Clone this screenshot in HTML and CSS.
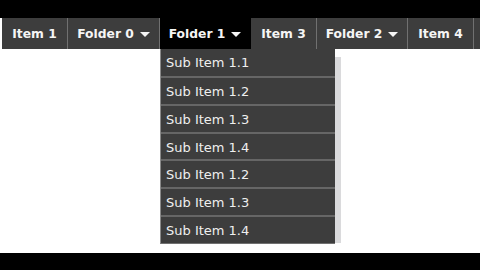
FILE: index.html
```html
<!DOCTYPE html>
<html lang="en">
<head>
    <meta charset="UTF-8">
    <title>Drop Down Menu</title>
    <link rel="stylesheet" href="styles.css">
</head>
<body>
    <div class="band"></div>
    <div class="page">
        <ul class="menu">
            <li class="item">Item 1</li>
            <li class="item folder">Folder 0 <span class="caret"></span></li>
            <li class="item folder active">Folder 1 <span class="caret"></span>
                <ul class="sub">
                    <li>Sub Item 1.1</li>
                    <li>Sub Item 1.2</li>
                    <li>Sub Item 1.3</li>
                    <li>Sub Item 1.4</li>
                    <li>Sub Item 1.2</li>
                    <li>Sub Item 1.3</li>
                    <li>Sub Item 1.4</li>
                </ul>
                <div class="ghost"></div>
            </li>
            <li class="item">Item 3</li>
            <li class="item folder">Folder 2 <span class="caret"></span></li>
            <li class="item">Item 4</li>
            <li class="item tail"></li>
        </ul>
    </div>
    <div class="band bottom"></div>
</body>
</html>
```

FILE: styles.css
```css
:root {
    --clr-bar: #3d3d3d;
    --clr-line: #707070;
    --clr-text: #f5f5f5;
}

* {
    box-sizing: border-box;
}

body {
    margin: 0;
    width: 480px;
    height: 270px;
    overflow: hidden;
    background: #fff;
    font-family: "DejaVu Sans", Verdana, sans-serif;
}

.band {
    height: 18px;
    background: #000;
}

.band.bottom {
    height: 17px;
}

.page {
    height: 235px;
    padding-left: 2px;
}

.menu {
    display: flex;
    margin: 0;
    padding: 0;
    list-style: none;
    height: 31px;
    background: var(--clr-bar);
}

.item {
    position: relative;
    display: flex;
    align-items: center;
    justify-content: center;
    gap: 6px;
    width: 66px;
    height: 31px;
    border-right: 1px solid var(--clr-line);
    color: var(--clr-text);
    font-size: 12.3px;
    font-weight: bold;
    white-space: nowrap;
}

.folder {
    width: 91px;
}

.menu > .item:nth-child(2) {
    width: 92px;
}

.active {
    background: #000;
    border-right-color: #000;
}

.tail {
    flex: 1;
    border-right: none;
}

.caret {
    width: 0;
    height: 0;
    margin-top: 1px;
    border-left: 5px solid transparent;
    border-right: 5px solid transparent;
    border-top: 5px solid var(--clr-text);
}

.sub {
    position: absolute;
    top: 100%;
    left: 0;
    z-index: 2;
    width: 175px;
    margin: 0;
    padding: 0;
    list-style: none;
    background: var(--clr-bar);
    border-left: 1px solid #8a8a8a;
    border-bottom: 1px solid #707070;
}

.sub li {
    height: 27.8px;
    line-height: 27px;
    padding-left: 5px;
    border-top: 2px solid #666;
    font-size: 13px;
    font-weight: normal;
    color: #efefef;
}

.sub li:first-child {
    border-top: none;
    height: 27px;
    line-height: 28px;
}

.ghost {
    position: absolute;
    top: 39px;
    left: 175px;
    z-index: 1;
    width: 6px;
    height: 186px;
    background: #dadadc;
}
```
